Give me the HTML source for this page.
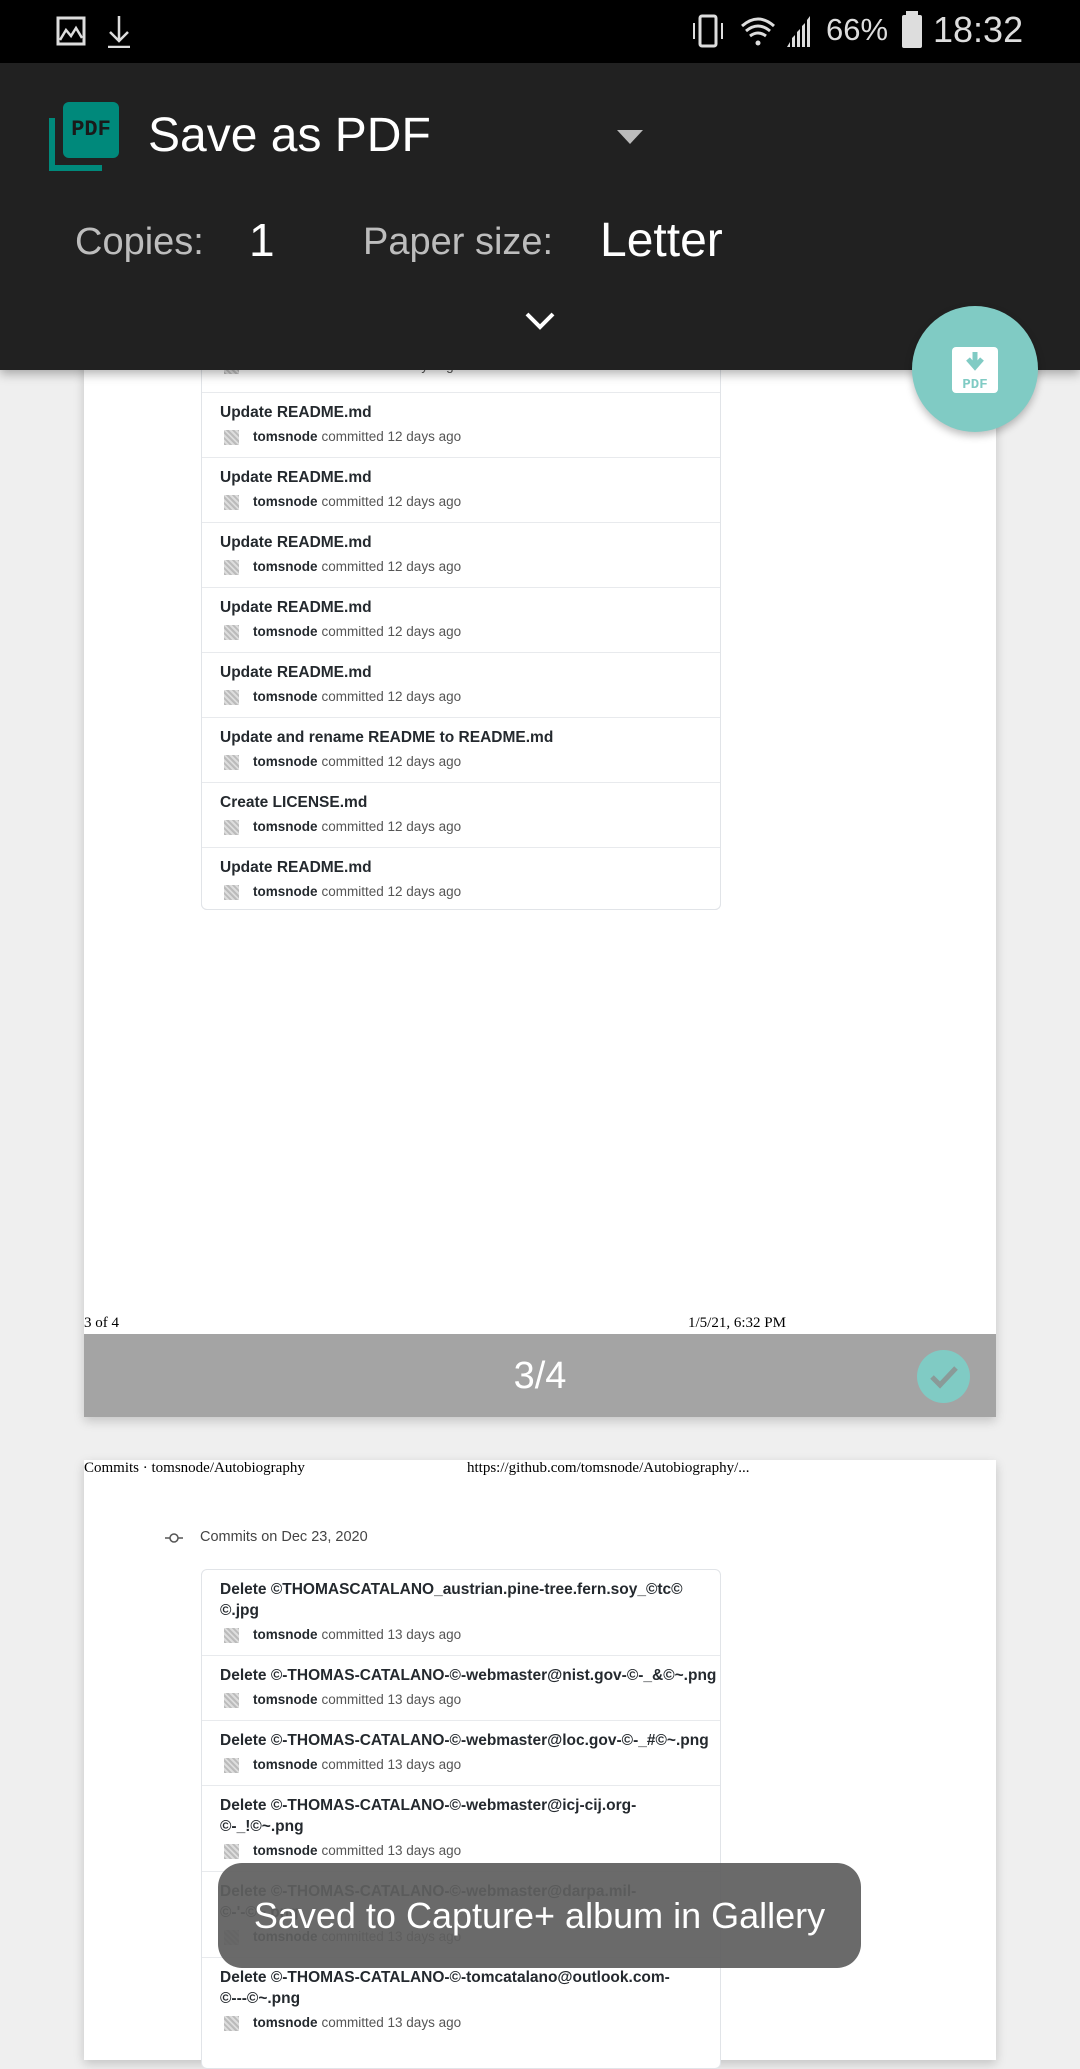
<!DOCTYPE html>
<html><head><meta charset="utf-8"><style>
*{margin:0;padding:0;box-sizing:border-box}
body{width:1080px;height:2034px;overflow:hidden;background:#efefef;font-family:"Liberation Sans",sans-serif;position:relative}
.abs{position:absolute}
.page{position:absolute;left:84px;width:912px;background:#fff;box-shadow:0 4px 10px rgba(0,0,0,.18)}
.box{position:absolute;left:201px;width:520px;border:1px solid #e1e4e8;border-radius:6px;background:#fff}
.row{border-top:1px solid #e8eaed;padding:9px 0 8px 18px}
.row:first-child{border-top:none}
.t{font-size:15.5px;font-weight:bold;color:#24292e;line-height:21px}
.m{font-size:13.5px;color:#555;line-height:24px;margin-top:2px;display:flex;align-items:center}
.m b{color:#24292e;margin-right:4px}
.av{width:15px;height:15px;background:#c8c5c0;margin:0 14px 0 4px;background-image:repeating-linear-gradient(45deg,#bbb 0 2px,#ddd 2px 4px)}
.serif{font-family:"Liberation Serif",serif;font-size:15px;color:#000}
</style></head><body>

<!-- page 1 -->
<div class="page" style="top:300px;height:1117px"></div>
<div class="box" style="top:300px;height:610px;border-top:none;border-radius:0 0 6px 6px;overflow:hidden">
  <div class="row" style="padding-top:52px;border:none"><div class="m"><span class="av"></span><b>tomsnode</b> committed 12 days ago</div></div>
</div>
<div class="box" style="top:392px;height:518px;border-top:none;border-radius:0 0 6px 6px">
  <div class="row" style="border-top:1px solid #e8eaed"><div class="t">Update README.md</div><div class="m"><span class="av"></span><b>tomsnode</b> committed 12 days ago</div></div>
  <div class="row"><div class="t">Update README.md</div><div class="m"><span class="av"></span><b>tomsnode</b> committed 12 days ago</div></div>
  <div class="row"><div class="t">Update README.md</div><div class="m"><span class="av"></span><b>tomsnode</b> committed 12 days ago</div></div>
  <div class="row"><div class="t">Update README.md</div><div class="m"><span class="av"></span><b>tomsnode</b> committed 12 days ago</div></div>
  <div class="row"><div class="t">Update README.md</div><div class="m"><span class="av"></span><b>tomsnode</b> committed 12 days ago</div></div>
  <div class="row"><div class="t">Update and rename README to README.md</div><div class="m"><span class="av"></span><b>tomsnode</b> committed 12 days ago</div></div>
  <div class="row"><div class="t">Create LICENSE.md</div><div class="m"><span class="av"></span><b>tomsnode</b> committed 12 days ago</div></div>
  <div class="row"><div class="t">Update README.md</div><div class="m"><span class="av"></span><b>tomsnode</b> committed 12 days ago</div></div>
</div>
<div class="abs serif" style="left:84px;top:1315px">3 of 4</div>
<div class="abs serif" style="left:688px;top:1315px">1/5/21, 6:32 PM</div>
<div class="abs" style="left:84px;top:1334px;width:912px;height:83px;background:#a4a4a4"></div>
<div class="abs" style="left:0;top:1355px;width:1080px;text-align:center;color:#fff;font-size:38px">3/4</div>
<div class="abs" style="left:917px;top:1350px;width:53px;height:53px;border-radius:50%;background:#80cbc4">
<svg width="53" height="53" viewBox="0 0 53 53"><path d="M15 27 L23 35 L39 18" fill="none" stroke="#8a9a98" stroke-width="5"/></svg></div>

<!-- page 2 -->
<div class="page" style="top:1460px;height:600px"></div>
<div class="abs serif" style="left:84px;top:1460px">Commits · tomsnode/Autobiography</div>
<div class="abs serif" style="left:467px;top:1460px">https://github.com/tomsnode/Autobiography/...</div>
<svg class="abs" style="left:164px;top:1531px" width="20" height="14"><line x1="1" y1="7" x2="19" y2="7" stroke="#555" stroke-width="1.5"/><circle cx="10" cy="7" r="4" fill="#fff" stroke="#555" stroke-width="1.5"/></svg>
<div class="abs" style="left:200px;top:1529px;font-size:14.5px;color:#444">Commits on Dec 23, 2020</div>
<div class="box" style="top:1569px;height:500px">
  <div class="row"><div class="t">Delete ©THOMASCATALANO_austrian.pine-tree.fern.soy_©tc©<br>©.jpg</div><div class="m"><span class="av"></span><b>tomsnode</b> committed 13 days ago</div></div>
  <div class="row"><div class="t">Delete ©-THOMAS-CATALANO-©-webmaster@nist.gov-©-_&amp;©~.png</div><div class="m"><span class="av"></span><b>tomsnode</b> committed 13 days ago</div></div>
  <div class="row"><div class="t">Delete ©-THOMAS-CATALANO-©-webmaster@loc.gov-©-_#©~.png</div><div class="m"><span class="av"></span><b>tomsnode</b> committed 13 days ago</div></div>
  <div class="row"><div class="t">Delete ©-THOMAS-CATALANO-©-webmaster@icj-cij.org-<br>©-_!©~.png</div><div class="m"><span class="av"></span><b>tomsnode</b> committed 13 days ago</div></div>
  <div class="row"><div class="t">Delete ©-THOMAS-CATALANO-©-webmaster@darpa.mil-<br>©-'-©~.png</div><div class="m"><span class="av"></span><b>tomsnode</b> committed 13 days ago</div></div>
  <div class="row"><div class="t">Delete ©-THOMAS-CATALANO-©-tomcatalano@outlook.com-<br>©---©~.png</div><div class="m"><span class="av"></span><b>tomsnode</b> committed 13 days ago</div></div>
</div>

<!-- toast -->
<div class="abs" style="left:218px;top:1863px;width:643px;height:105px;border-radius:24px;background:rgba(95,95,95,.93);color:#fff;font-size:36px;line-height:105px;text-align:center">Saved to Capture+ album in Gallery</div>

<!-- status bar -->
<div class="abs" style="left:0;top:0;width:1080px;height:63px;background:#000"></div>
<svg class="abs" style="left:56px;top:16px" width="80" height="32">
<rect x="2" y="2" width="26" height="26" fill="none" stroke="#ddd" stroke-width="3"/><path d="M4 24 L10 14 L15 20 L20 12 L26 22" fill="none" stroke="#ddd" stroke-width="2.5"/>
<path d="M63 0 V24 M54 16 L63 25 L72 16" fill="none" stroke="#ddd" stroke-width="2.5"/><line x1="52" y1="31" x2="74" y2="31" stroke="#ddd" stroke-width="2.5"/></svg>
<svg class="abs" style="left:692px;top:14px" width="130" height="36">
<rect x="8" y="2" width="16" height="30" rx="2" fill="none" stroke="#ddd" stroke-width="3"/><path d="M2 9 V25 M30 9 V25" stroke="#ddd" stroke-width="2"/>
<path d="M50 12 Q66 -2 82 12 M54 17 Q66 7 78 17 M58 22 Q66 16 74 22" fill="none" stroke="#ddd" stroke-width="3"/><circle cx="66" cy="29" r="2.5" fill="#ddd"/>
<path d="M95 33 L98 33 L98 28 Z M100 33 V24 L103 21 V33 Z M105 33 V18 L108 15 V33 Z M110 33 V12 L113 9 V33 Z M115 33 V6 L118 2 V33Z" fill="#ddd"/></svg>
<div class="abs" style="left:826px;top:12px;color:#ddd;font-size:31px">66%</div>
<div class="abs" style="left:902px;top:15px;width:20px;height:33px;background:#ddd;border-radius:2px"></div>
<div class="abs" style="left:906px;top:11px;width:12px;height:5px;background:#ddd"></div>
<div class="abs" style="left:933px;top:9px;color:#ddd;font-size:36px">18:32</div>

<!-- toolbar -->
<div class="abs" style="left:0;top:63px;width:1080px;height:307px;background:#212121;box-shadow:0 4px 10px rgba(0,0,0,.3)"></div>
<div class="abs" style="left:49px;top:118px;width:6px;height:53px;background:#00897b"></div>
<div class="abs" style="left:49px;top:165px;width:53px;height:6px;background:#00897b"></div>
<div class="abs" style="left:63px;top:102px;width:56px;height:56px;background:#00897b;border-radius:6px;color:#1a1a1a;font-weight:bold;font-size:22px;line-height:56px;text-align:center;font-family:'Liberation Mono',monospace">PDF</div>
<div class="abs" style="left:148px;top:108px;color:#fff;font-size:48px">Save as PDF</div>
<svg class="abs" style="left:617px;top:130px" width="26" height="15"><path d="M0 0 H26 L13 14Z" fill="#bbb"/></svg>
<div class="abs" style="left:75px;top:221px;color:#bdbdbd;font-size:38px">Copies:</div>
<div class="abs" style="left:249px;top:213px;color:#fff;font-size:46px">1</div>
<div class="abs" style="left:363px;top:221px;color:#bdbdbd;font-size:38px">Paper size:</div>
<div class="abs" style="left:600px;top:213px;color:#fff;font-size:48px">Letter</div>
<svg class="abs" style="left:524px;top:311px" width="32" height="20"><path d="M3 3 L16 16 L29 3" fill="none" stroke="#fff" stroke-width="4"/></svg>

<!-- FAB -->
<div class="abs" style="left:912px;top:306px;width:126px;height:126px;border-radius:50%;background:#80cbc4;box-shadow:0 4px 8px rgba(0,0,0,.25)"></div>
<div class="abs" style="left:952px;top:347px;width:46px;height:46px;background:#fff;border-radius:4px"></div>
<svg class="abs" style="left:952px;top:347px" width="46" height="46"><path d="M23 5 V17 M16 12 L23 20 L30 12" fill="none" stroke="#80cbc4" stroke-width="5"/><text x="23" y="41" text-anchor="middle" font-family="Liberation Mono" font-weight="bold" font-size="14" fill="#80cbc4">PDF</text></svg>
</body></html>
